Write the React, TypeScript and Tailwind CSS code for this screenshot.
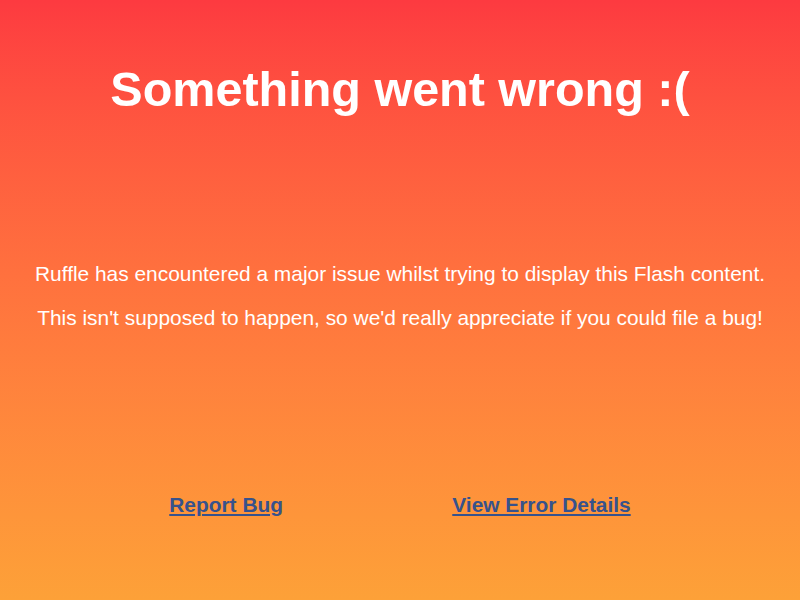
export default function App() {
  return (
    <div
      className="flex h-[600px] w-[800px] flex-col bg-gradient-to-b from-[#fd3a40] to-[#fda138] pt-[62px] text-center text-[20.9px] text-white"
      style={{ fontFamily: '"Liberation Sans", Arial, sans-serif' }}
    >
      <div className="text-[48.5px] font-bold leading-[55px]">Something went wrong :(</div>
      <div className="mt-[145px] flex flex-col gap-5 leading-[24px]">
        <p>Ruffle has encountered a major issue whilst trying to display this Flash content.</p>
        <p>This isn't supposed to happen, so we'd really appreciate if you could file a bug!</p>
      </div>
      <ul className="mt-[163px] flex justify-evenly leading-[24px]">
        <li>
          <a href="#" className="font-bold text-[#37528c] underline">
            Report Bug
          </a>
        </li>
        <li>
          <a href="#" className="font-bold text-[#37528c] underline">
            View Error Details
          </a>
        </li>
      </ul>
    </div>
  );
}
